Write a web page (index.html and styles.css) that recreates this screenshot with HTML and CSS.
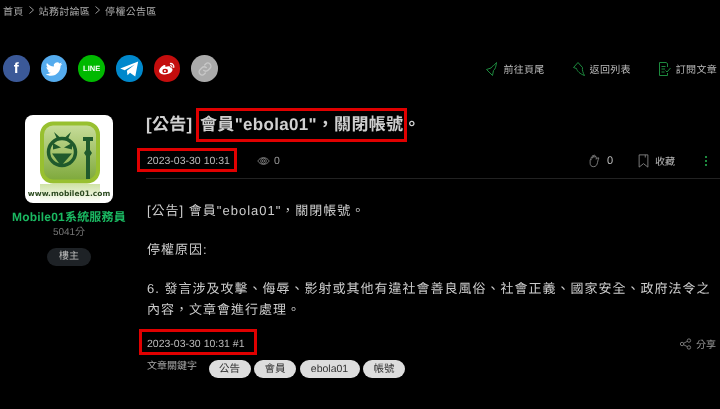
FILE: index.html
```html
<!DOCTYPE html>
<html lang="zh-Hant">
<head>
    <meta charset="UTF-8">
    <meta name="viewport" content="width=device-width, initial-scale=1.0">
    <title>停權公告區</title>
    <link rel="stylesheet" href="styles.css">
</head>
<body>
    <nav class="breadcrumb">
        <span>首頁</span>
        <svg class="crumb-arrow" viewBox="0 0 5 8"><path d="M.5 .5L4.500 4 .5 7.500"/></svg>
        <span>站務討論區</span>
        <svg class="crumb-arrow" viewBox="0 0 5 8"><path d="M.5 .5L4.500 4 .5 7.500"/></svg>
        <span>停權公告區</span>
    </nav>

    <div class="toolbar">
        <div class="share-icons">
            <span class="circle facebook"><span class="fb-f">f</span></span>
            <span class="circle twitter">
                <svg viewBox="0 0 24 24" width="18" height="18"><path fill="#fff" d="M23 5.200c-.8.4-1.700.6-2.600.7.900-.6 1.600-1.400 2-2.500-.9.5-1.800.9-2.900 1.100A4.500 4.500 0 0 0 11.800 8.700C8.100 8.500 4.800 6.700 2.600 4c-1.200 2.100-.6 4.700 1.400 6-.7 0-1.400-.2-2-.6 0 2.200 1.500 4.100 3.600 4.500-.7.2-1.400.2-2 .1.600 1.800 2.200 3.100 4.200 3.100A9.100 9.100 0 0 1 1 19c2 1.300 4.400 2 6.900 2 8.400 0 13.100-7.100 12.800-13.400.9-.6 1.700-1.400 2.300-2.400z"/></svg>
            </span>
            <span class="circle line"><span class="line-text">LINE</span></span>
            <span class="circle telegram">
                <svg viewBox="0 0 24 24" width="20" height="20"><path fill="#fff" d="M1.500 11.500L23 3l-3.500 18-6.300-4.600-3 3.100-.7-5.500L19 6.500 6.800 13.500z"/></svg>
            </span>
            <span class="circle weibo">
                <svg viewBox="0 0 24 24" width="20" height="20"><path fill="#fff" d="M10 9.500c3.800-1.600 6.200-1 6.500 1 1.800.5 2.500 1.500 2 3-.9 3-5 5-9 5s-7-1.700-7-4.200c0-2.400 3.700-6.300 6.200-7 1.300-.3 1.900.8 1.300 2.200z"/><ellipse cx="9.800" cy="14.300" rx="3.300" ry="2.600" fill="#c40d0d"/><circle cx="9.500" cy="14.500" r="1.200" fill="#fff"/><path fill="none" stroke="#fff" stroke-width="1.500" d="M15.500 5.500c3-.6 5.500 2 4.500 5.200M15.800 8c1.400-.2 2.300 1 2 2.300"/></svg>
            </span>
            <span class="circle link">
                <svg viewBox="0 0 24 24" width="16" height="16"><path fill="none" stroke="#c8c8c8" stroke-width="2" stroke-linecap="round" d="M10 14a4.500 4.500 0 0 0 6.500 0l3-3A4.500 4.500 0 0 0 13 4.500l-1.500 1.500M14 10a4.500 4.500 0 0 0-6.500 0l-3 3a4.500 4.500 0 0 0 6.500 6.500l1.500-1.500"/></svg>
            </span>
        </div>
        <div class="actions">
            <a class="action">
                <svg class="action-icon" viewBox="0 0 12 14"><path d="M10.500 .5C9 3 6 4 5 6L.5 7.500 6.500 13.500 7.500 8.500C9.500 7 10 4 10.500 .5z"/></svg>
                前往頁尾
            </a>
            <a class="action">
                <svg class="action-icon" viewBox="0 0 12 14"><path d="M5 .5L.5 5.500 3.500 6.500C4 9 7 12 11.500 13.500 10 11 9 8 9.500 5.500z"/></svg>
                返回列表
            </a>
            <a class="action">
                <svg class="action-icon" viewBox="0 0 12 14"><path d="M8.500 5V1.500L7 .5H.5v13h8V11M2.500 4.500H6.500M2.500 7h3.500M2.500 10h3M6.500 8.500l1.500 1.500 3.500-4"/></svg>
                訂閱文章
            </a>
        </div>
    </div>

    <main class="post">
        <aside class="author">
            <svg class="avatar" viewBox="0 0 88 88">
                <defs>
                    <linearGradient id="tile" x1="0" y1="0" x2="0" y2="1">
                        <stop offset="0" stop-color="#c9de9c"/>
                        <stop offset="1" stop-color="#7da83a"/>
                    </linearGradient>
                    <linearGradient id="shine" x1="0" y1="0" x2="0" y2="1">
                        <stop offset="0" stop-color="#cfe3a6"/>
                        <stop offset="1" stop-color="#fff"/>
                    </linearGradient>
                </defs>
                <rect width="88" height="88" rx="8" fill="#fff"/>
                <rect x="15" y="69" width="60" height="19" fill="url(#shine)"/>
                <rect x="17" y="8.500" width="56" height="58" rx="11" fill="url(#tile)" stroke="#98c030" stroke-width="4"/>
                <circle cx="37" cy="37" r="13.500" fill="none" stroke="#1f5a2c" stroke-width="3.500"/>
                <path fill="#1f5a2c" d="M27 38.500h20L36 51zM28 28l8 4.500-8 2zM47 28l-8 4.500 8 2zM29 17l6 5.500h5l6-5.500-3 7H32z"/>
                <path fill="#1f5a2c" d="M58 22h10v4h-3v9l2 3-2 3v23h-4V41l-2-3 2-3v-9h-3z"/>
                <text class="avatar-url" x="44" y="81" text-anchor="middle">www.mobile01.com</text>
            </svg>
            <div class="author-name">Mobile01系統服務員</div>
            <div class="author-score">5041分</div>
            <div class="author-role">樓主</div>
        </aside>

        <article class="content">
            <h1 class="post-title">[公告] <span class="mark-title">會員"ebola01"，關閉帳號</span>。</h1>
            <div class="post-meta">
                <span class="mark-date">2023-03-30 10:31</span>
                <span class="views">
                    <svg class="meta-icon" viewBox="0 0 16 12"><path d="M1 6c3-5.500 11-5.500 14 0-3 5.500-11 5.500-14 0z"/><ellipse cx="8" cy="6" rx="3.500" ry="3.500"/><circle cx="8" cy="6" r="1.500"/></svg>
                    0
                </span>
                <span class="meta-right">
                    <span class="meta-item">
                        <svg class="meta-icon clap" viewBox="0 0 14 16"><path d="M3 7V4.500c0-1 1.200-1 1.500 0M4.500 5V2.500c0-1 1.500-1 1.500 0M6 4V2c0-1 1.500-1 1.500 0v2M7.500 3.500c0-1 1.500-1 1.500 0V6c1-1.500 2.500-2 3-1.500-1 1.500-1 3-1.500 5-.5 3-2 5-4.500 5S2 13 2 10.500V7c0-1 1-1 1 0"/></svg>
                        <span class="count">0</span>
                    </span>
                    <span class="meta-item">
                        <svg class="meta-icon bookmark" viewBox="0 0 12 16"><path d="M1 1h10v14l-5-4-5 4zM8 1v3"/></svg>
                        收藏
                    </span>
                    <span class="more"><i></i><i></i><i></i></span>
                </span>
            </div>
            <div class="post-body">
                <p>[公告] 會員"ebola01"，關閉帳號。</p>
                <p>停權原因:</p>
                <p>6. 發言涉及攻擊、侮辱、影射或其他有違社會善良風俗、社會正義、國家安全、政府法令之內容，文章會進行處理。</p>
            </div>
            <div class="post-foot">
                <span class="mark-floor">2023-03-30 10:31 #1</span>
                <span class="share">
                    <svg class="meta-icon" viewBox="0 0 14 14"><circle cx="3" cy="7" r="2"/><circle cx="11" cy="3" r="2"/><circle cx="11" cy="11" r="2"/><path d="M5 6l4-2M5 8l4 2"/></svg>
                    分享
                </span>
            </div>
            <div class="keywords">
                <span class="keywords-label">文章關鍵字</span>
                <span class="tag tag-short">公告</span>
                <span class="tag tag-short">會員</span>
                <span class="tag tag-long">ebola01</span>
                <span class="tag tag-short">帳號</span>
            </div>
        </article>
    </main>
</body>
</html>
```

FILE: styles.css
```css
* {
    box-sizing: border-box;
}
html, body {
    height: 100%;
}
body {
    margin: 0;
    background-color: #000;
    color: #ccc;
    font-family: "Liberation Sans", "Noto Sans CJK TC", sans-serif;
    text-rendering: geometricPrecision;
    overflow: hidden;
}
.breadcrumb, .toolbar, .post {
    will-change: transform; /* keeps text antialiasing grey */
}
.breadcrumb {
    display: flex;
    align-items: center;
    gap: 5px;
    padding-left: 3px;
    height: 20px;
    font-size: 10px;
    letter-spacing: 0.3px;
    color: #aaa;
}
.crumb-arrow {
    width: 5px;
    height: 8px;
}
.crumb-arrow path {
    fill: none;
    stroke: #999;
    stroke-width: 1;
}
.toolbar {
    display: flex;
    justify-content: space-between;
    align-items: center;
    margin-top: 35px;
    padding-left: 3px;
    height: 27px;
}
.share-icons {
    display: flex;
    gap: 11.2px;
}
.circle {
    width: 26.5px;
    height: 26.5px;
    border-radius: 50%;
    display: flex;
    align-items: center;
    justify-content: center;
}
.facebook { background-color: #3b5998; }
.twitter { background-color: #55acee; }
.line { background-color: #00b900; }
.telegram { background-color: #0088cc; }
.weibo { background-color: #c40d0d; }
.link { background-color: #aaa; }
.fb-f {
    color: #fff;
    font-size: 15px;
    font-weight: bold;
}
.line-text {
    color: #fff;
    font-size: 7.5px;
    font-weight: bold;
}
.actions {
    display: flex;
    gap: 28px;
    padding-right: 3px;
}
.action {
    display: flex;
    align-items: center;
    gap: 5px;
    font-size: 10px;
    letter-spacing: 0.3px;
    color: #bbb;
}
.action-icon {
    width: 12px;
    height: 14px;
}
.action-icon path {
    fill: none;
    stroke: #1d8a3e;
    stroke-width: 1;
}
.post {
    display: flex;
    margin-top: 29px;
}
.author {
    flex: none;
    width: 138px;
    display: flex;
    flex-direction: column;
    align-items: center;
    padding-top: 4px;
}
.avatar {
    width: 88px;
    height: 88px;
}
.avatar-url {
    font-family: "DejaVu Sans", sans-serif;
    font-size: 7.5px;
    font-weight: bold;
    fill: #2c4a20;
}
.author-name {
    margin-top: 7px;
    font-size: 12px;
    line-height: 15px;
    font-weight: bold;
    letter-spacing: 0.2px;
    color: #1ab861;
}
.author-score {
    font-size: 10px;
    line-height: 15px;
    color: #777;
}
.author-role {
    margin-top: 8px;
    width: 44px;
    height: 18px;
    line-height: 18px;
    border-radius: 9px;
    text-align: center;
    font-size: 10px;
    background-color: #1e2226;
    color: #bbb;
}
.content {
    flex: 1;
    min-width: 0;
    padding-left: 8px;
}
.post-title {
    margin: 0;
    font-size: 17px;
    line-height: 28px;
    letter-spacing: 0.3px;
    color: #d0d0d0;
}
.mark-title {
    display: inline-block;
    padding: 0 1px;
    margin: 0 -1px 0 1.5px;
    outline: 3px solid #e00000;
}
.post-meta {
    display: flex;
    align-items: center;
    height: 36px;
    margin-top: 4px;
    padding-left: 1px;
    font-size: 10.5px;
    color: #bbb;
    border-bottom: 1px solid #222;
}
.mark-date {
    padding: 4px 4px 2px 7px;
    margin: -4px -4px -2px -7px;
    outline: 3px solid #e00000;
}
.views {
    display: flex;
    align-items: center;
    gap: 4px;
    margin-left: 27px;
    color: #999;
}
.meta-icon {
    width: 13px;
    height: 12px;
}
.meta-icon path, .meta-icon circle, .meta-icon ellipse {
    fill: none;
    stroke: #888;
    stroke-width: 1;
}
.clap {
    height: 14px;
}
.bookmark {
    width: 11px;
    height: 14px;
}
.meta-right {
    display: flex;
    align-items: center;
    margin-left: auto;
    gap: 25px;
    padding-right: 13px;
    font-size: 10px;
}
.meta-item {
    display: flex;
    align-items: center;
    gap: 6px;
}
.count {
    font-size: 11px;
}
.more {
    display: flex;
    flex-direction: column;
    gap: 2px;
    margin-left: 5px;
}
.more i {
    width: 2px;
    height: 2px;
    background-color: #1d8a3e;
}
.post-body {
    padding: 21px 0 0 1px;
    font-size: 13px;
    line-height: 21px;
    letter-spacing: 1px;
    color: #ccc;
}
.post-body p {
    margin: 0 0 18px;
}
.post-body p:last-child {
    margin-bottom: 0;
}
.post-foot {
    display: flex;
    justify-content: space-between;
    align-items: center;
    margin-top: 16px;
    padding: 0 4px 0 1px;
    font-size: 10.5px;
    color: #bbb;
}
.mark-floor {
    padding: 6px 9px 2px 5px;
    margin: -6px -9px -2px -5px;
    outline: 3px solid #e00000;
}
.share {
    display: flex;
    align-items: center;
    gap: 4px;
    font-size: 10px;
    color: #999;
}
.keywords {
    display: flex;
    align-items: center;
    gap: 3.5px;
    margin-top: 9px;
    padding-left: 1px;
    font-size: 10.5px;
}
.keywords-label {
    align-self: flex-start;
    width: 58px;
    font-size: 10px;
    line-height: 13px;
    color: #aaa;
}
.tag {
    height: 18px;
    line-height: 18px;
    border-radius: 9px;
    text-align: center;
    background-color: #ddd;
    color: #333;
}
.tag-short {
    width: 42px;
}
.tag-long {
    width: 60px;
}
```
